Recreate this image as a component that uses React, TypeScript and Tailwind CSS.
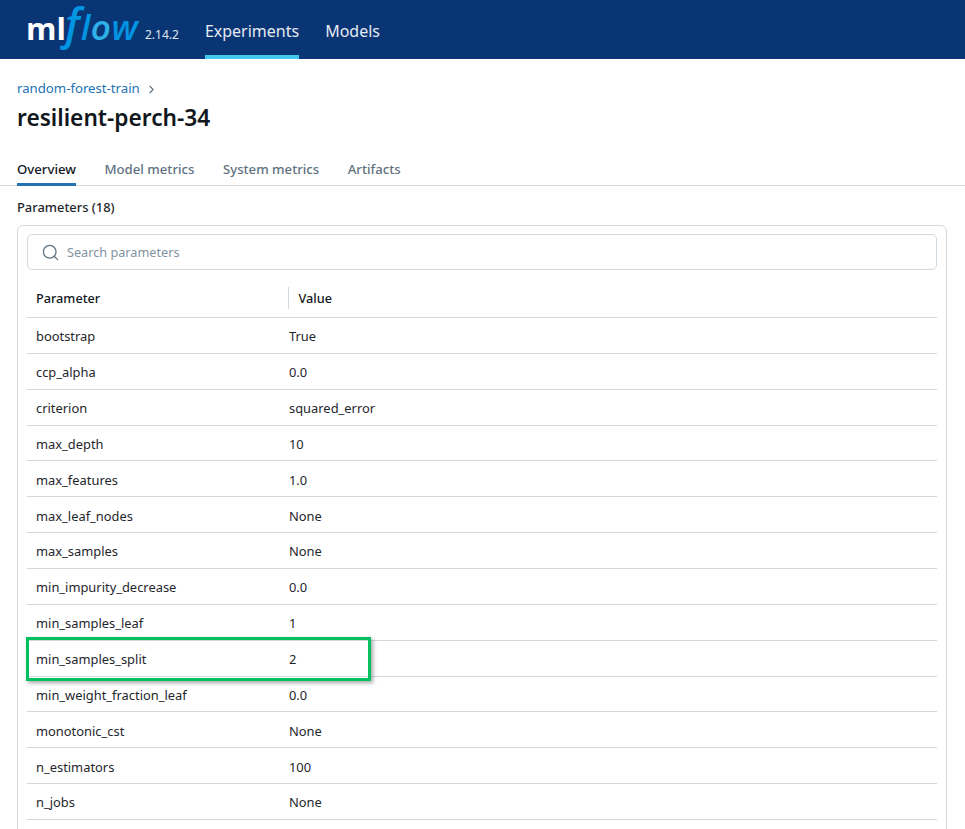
import { Search, ChevronRight } from "lucide-react";

const rows: [string, string][] = [
  ["bootstrap", "True"],
  ["ccp_alpha", "0.0"],
  ["criterion", "squared_error"],
  ["max_depth", "10"],
  ["max_features", "1.0"],
  ["max_leaf_nodes", "None"],
  ["max_samples", "None"],
  ["min_impurity_decrease", "0.0"],
  ["min_samples_leaf", "1"],
  ["min_samples_split", "2"],
  ["min_weight_fraction_leaf", "0.0"],
  ["monotonic_cst", "None"],
  ["n_estimators", "100"],
  ["n_jobs", "None"],
];

function Logo() {
  return (
    <div className="flex items-baseline w-[114px] h-[59px] pt-[6px] select-none font-['Open_Sans',sans-serif]">
      <span className="font-bold text-[31px] leading-[36px] text-white">ml</span>
      <span className="italic font-semibold text-[43px] leading-[36px] text-[#0194e2] -ml-[1px]">f</span>
      <span className="italic font-semibold text-[35px] leading-[36px] tracking-[0.5px] text-[#0194e2] ml-[1px]">
        l<span className="text-[#2fb0e8]">o</span>w
      </span>
    </div>
  );
}

export default function App() {
  return (
    <div className="relative w-[965px] h-[829px] overflow-hidden bg-white font-['Noto_Sans','Open_Sans',sans-serif] text-[12.9px] text-[#1f272d]">
      <header className="flex h-[59px] bg-[#0a3574] pl-[26px]">
        <Logo />
        <span className="ml-[5px] mt-[27px] text-[12px] leading-[16px] text-[#dfe6ef]">2.14.2</span>
        <nav className="ml-[26px] flex gap-[26px] text-[16px] text-[#e4ebf3]">
          <div className="flex flex-col justify-between">
            <span className="mt-[20px] leading-[22px]">Experiments</span>
            <div className="h-1 bg-[#43c9ed]" />
          </div>
          <span className="mt-[20px] leading-[22px]">Models</span>
        </nav>
      </header>

      <main className="pt-[21px]">
        <div className="flex items-center pl-[17px] h-[18px] text-[#2272b4] text-[13.2px]">
          <span>random-forest-train</span>
          <ChevronRight className="ml-[5px] mt-[1px] w-[13px] h-[13px] text-[#5f7281]" strokeWidth={2} />
        </div>
        <h1 className="pl-[17px] mt-[4px] h-[32px] text-[22.7px] leading-[32px] font-semibold text-[#11171c]">resilient-perch-34</h1>

        <div className="mt-[26px] flex gap-[28.5px] pl-[17px] border-b border-[#d1d9e1] h-[26px] text-[13.2px] font-medium text-[#5f7281]">
          <div className="h-[26px] border-b-[3px] border-[#2272b4] text-[#11171c] leading-[18px]">Overview</div>
          <div className="leading-[18px]">Model metrics</div>
          <div className="leading-[18px]">System metrics</div>
          <div className="leading-[18px]">Artifacts</div>
        </div>

        <div className="ml-[17px] mt-[12px] h-[19px] leading-[18px] font-medium text-[#1f272d]">Parameters (18)</div>

        <section className="ml-[17px] mt-[8px] w-[930px] border border-[#d1d9e1] rounded-[6px] px-[9px] pt-[8px] pb-[40px]">
          <div className="flex items-center h-[36px] border border-[#d1d9e1] rounded-[5px] pl-[13px]">
            <Search className="w-[19px] h-[19px] text-[#5f7281]" strokeWidth={1.6} />
            <span className="ml-[7px] pt-[1px] text-[12.7px] text-[#82929f]">Search parameters</span>
          </div>

          <div className="flex items-center h-[48px] pt-[8px] border-b border-[#d1d9e1] text-[12.7px] font-medium leading-[22px] text-[#11171c]">
            <div className="w-[260.5px] h-[22px] pl-[9px]">Parameter</div>
            <div className="h-[22px] border-l border-[#d1d9e1] pl-[10px]">Value</div>
          </div>

          {rows.map(([k, v]) => (
            <div key={k} className="flex items-center h-[35.86px] pt-[3px] border-b border-[#d1d9e1] text-[#1f272d]">
              <div className="w-[262px] pl-[9px]">{k}</div>
              <div>{v}</div>
            </div>
          ))}
        </section>
      </main>

      <div className="absolute left-[26px] top-[637px] w-[345px] h-[44px] border-[3px] border-[#00c060] shadow-[2px_2px_4px_rgba(0,0,0,0.35)]" />
    </div>
  );
}
